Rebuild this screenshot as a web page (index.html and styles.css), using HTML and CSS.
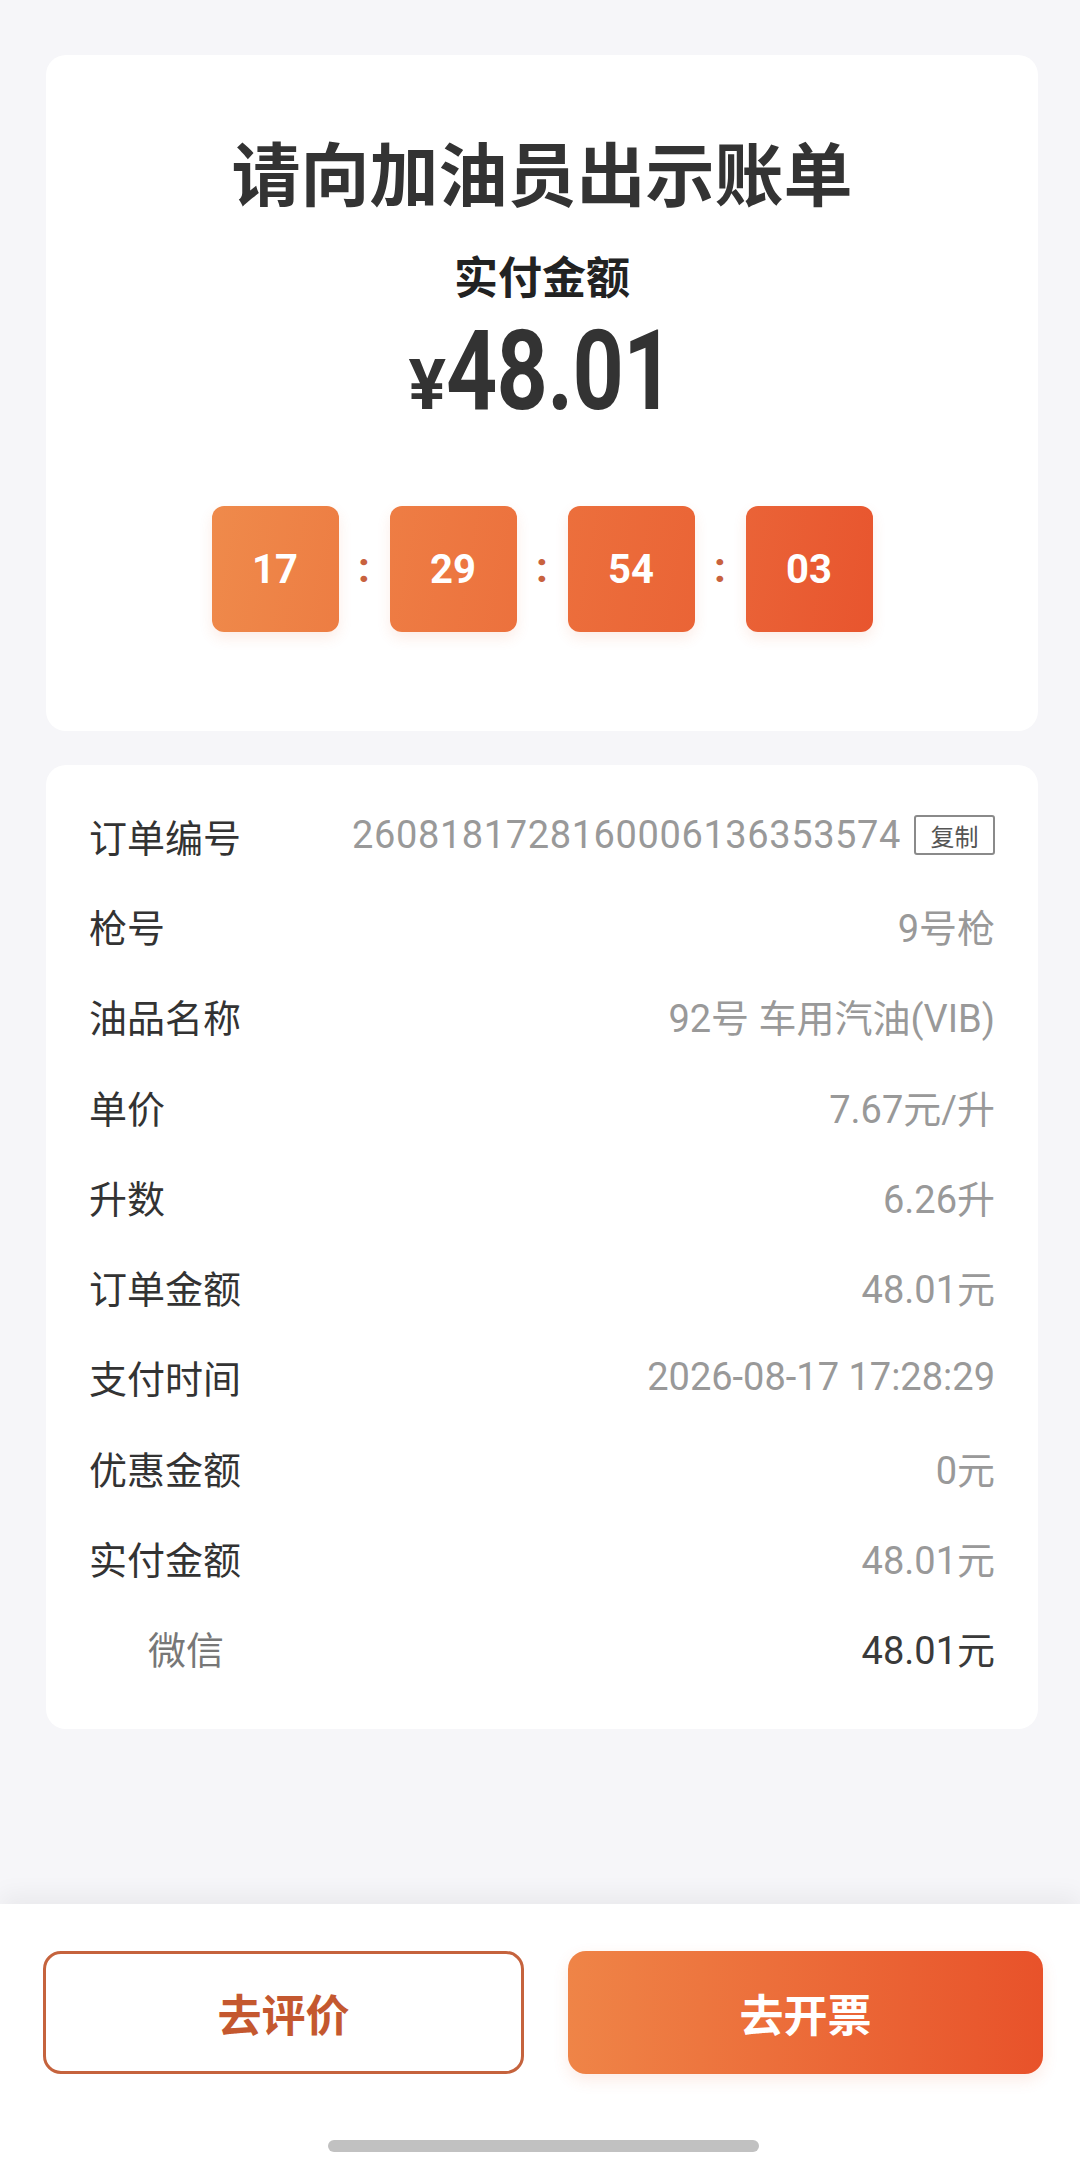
FILE: index.html
```html
<!DOCTYPE html>
<html lang="zh-CN">
<head>
    <meta charset="UTF-8">
    <meta name="viewport" content="width=device-width, initial-scale=1.0">
    <title>订单详情</title>
    <link rel="stylesheet" href="styles.css">
</head>
<body>

    <div class="page">
        <div class="content">
            <div class="card card-top">
                <h1 class="titolo">请向加油员出示账单</h1>
                <div class="paid-label">实付金额</div>
                <div class="amount">
                    <span class="yen">¥</span><span class="num">48.01</span>
                </div>

                <div class="countdown">
                    <div class="box box-1">17</div>
                    <span class="colon">:</span>
                    <div class="box box-2">29</div>
                    <span class="colon">:</span>
                    <div class="box box-3">54</div>
                    <span class="colon">:</span>
                    <div class="box box-4">03</div>
                </div>
            </div>

            <div class="card card-info">
                <div class="row">
                    <span class="label">订单编号</span>
                    <span class="value">
                        <span class="order-no">2608181728160006136353574</span>
                        <span class="copy">复制</span>
                    </span>
                </div>
                <div class="row">
                    <span class="label">枪号</span>
                    <span class="value">9号枪</span>
                </div>
                <div class="row">
                    <span class="label">油品名称</span>
                    <span class="value">92号 车用汽油(VIB)</span>
                </div>
                <div class="row">
                    <span class="label">单价</span>
                    <span class="value">7.67元/升</span>
                </div>
                <div class="row">
                    <span class="label">升数</span>
                    <span class="value">6.26升</span>
                </div>
                <div class="row">
                    <span class="label">订单金额</span>
                    <span class="value">48.01元</span>
                </div>
                <div class="row">
                    <span class="label">支付时间</span>
                    <span class="value">2026-08-17 17:28:29</span>
                </div>
                <div class="row">
                    <span class="label">优惠金额</span>
                    <span class="value">0元</span>
                </div>
                <div class="row">
                    <span class="label">实付金额</span>
                    <span class="value">48.01元</span>
                </div>
                <div class="row row-sub">
                    <span class="label">微信</span>
                    <span class="value">48.01元</span>
                </div>
            </div>
        </div>

        <div class="bottom-bar">
            <div class="buttons">
                <button class="btn btn-outline">去评价</button>
                <button class="btn btn-fill">去开票</button>
            </div>
            <div class="home-bar"></div>
        </div>
    </div>

</body>
</html>
```

FILE: styles.css
```css
body {
    margin: 0;
    padding: 0;
    background-color: #f6f6f9;
    font-family: Roboto, "Noto Sans CJK SC", sans-serif;
    color: #333;
}

.page {
    display: flex;
    flex-direction: column;
    min-height: 100vh;
}

.content {
    padding: 55px 42px 0 46px;
    display: flex;
    flex-direction: column;
    gap: 34px;
}

.card {
    background-color: white;
    border-radius: 20px;
}

/* header card */
.card-top {
    display: flex;
    flex-direction: column;
    align-items: center;
    padding: 76px 0 99px;
}

.titolo {
    margin: 0;
    font-family: "Noto Sans CJK SC", sans-serif;
    font-size: 69px;
    line-height: 80px;
    font-weight: 700;
    color: #333;
}

.paid-label {
    margin-top: 42px;
    font-size: 44px;
    line-height: 52px;
    font-weight: 700;
    color: #222;
}

.amount {
    display: flex;
    align-items: baseline;
    height: 131px;
    line-height: 131px;
    color: #333;
    font-weight: 700;
}

.yen {
    font-size: 70px;
    font-weight: 700;
}

.num {
    display: inline-block;
    font-size: 112px;
    letter-spacing: -1px;
    transform: scaleX(0.8);
    transform-origin: left center;
    margin-right: -55px;
}

.countdown {
    margin-top: 70px;
    display: flex;
    align-items: center;
}

.box {
    width: 127px;
    height: 126px;
    border-radius: 12px;
    display: flex;
    align-items: center;
    justify-content: center;
    color: white;
    font-size: 40px;
    font-weight: 700;
    box-shadow: 0 6px 14px rgba(232, 100, 50, 0.12);
}

.box-1 { background: linear-gradient(100deg, #ef8a4b, #ed7d43); }
.box-2 { background: linear-gradient(100deg, #ee7d44, #ec713d); }
.box-3 { background: linear-gradient(100deg, #ec6f3c, #ea6436); }
.box-4 { background: linear-gradient(100deg, #ea6337, #e8552e); }

.colon {
    width: 51px;
    text-align: center;
    font-size: 42px;
    font-weight: 700;
    color: #c8623e;
    margin-top: -4px;
}

/* info card */
.card-info {
    padding: 25px 43px 36px 43px;
}

.row {
    display: flex;
    justify-content: space-between;
    align-items: center;
    height: 90.3px;
}

.label {
    font-size: 38px;
    color: #333;
}

.value {
    display: flex;
    align-items: center;
    font-size: 38px;
    color: #999;
}

.order-no {
    letter-spacing: 0.6px;
}

.copy {
    margin-left: 13px;
    width: 77px;
    height: 36px;
    border: 2px solid #8a8a8a;
    border-radius: 3px;
    display: flex;
    align-items: center;
    justify-content: center;
    font-family: "Noto Sans CJK SC", sans-serif;
    font-size: 24px;
    color: #555;
}

.row-sub .label {
    padding-left: 59px;
    color: #777;
}

.row-sub .value {
    color: #3a3a3a;
}

/* bottom */
.bottom-bar {
    margin-top: auto;
    background-color: white;
    box-shadow: 0 -10px 22px rgba(0, 0, 0, 0.05);
    padding: 47px 37px 23px 43px;
}

.buttons {
    display: flex;
    gap: 44px;
}

.btn {
    flex: 1;
    height: 123px;
    border-radius: 18px;
    font-family: "Noto Sans CJK SC", sans-serif;
    font-size: 44px;
    font-weight: 700;
    cursor: pointer;
}

.btn-outline {
    background-color: white;
    border: 3px solid #c5633d;
    color: #c4582f;
}

.btn-fill {
    border: none;
    background: linear-gradient(90deg, #ef8447, #e8522a);
    color: white;
    box-shadow: 0 6px 16px rgba(232, 90, 40, 0.12);
}

.home-bar {
    width: 431px;
    height: 12px;
    margin: 66px auto 0;
    border-radius: 6px;
    background-color: #c1c1c1;
}
```
